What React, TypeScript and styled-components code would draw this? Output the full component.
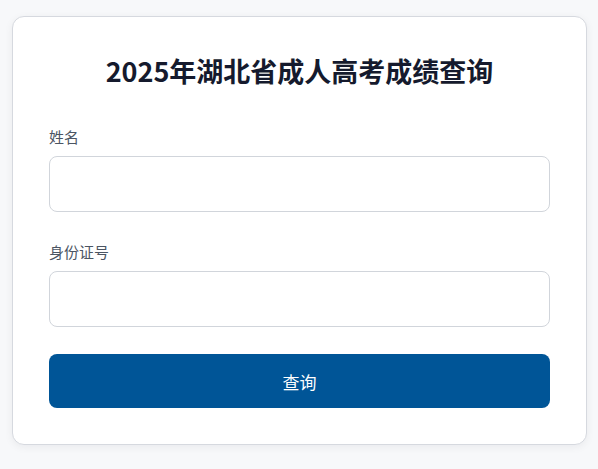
import styled, { createGlobalStyle } from 'styled-components';

const GlobalStyle = createGlobalStyle`
  * { box-sizing: border-box; }
  body {
    margin: 0;
    background: #f7f8fa;
    font-family: "Noto Sans CJK SC", "Noto Sans", sans-serif;
  }
`;

const Page = styled.div`
  padding: 16px 11px 16px 12px;
`;

const Card = styled.form`
  display: flex;
  flex-direction: column;
  padding: 34px 36px 36px;
  background: #ffffff;
  border: 1px solid #d6d9df;
  border-radius: 12px;
  box-shadow: 0 2px 8px rgba(15, 23, 42, 0.06);
`;

const Title = styled.h1`
  margin: 0 0 35px;
  font-size: 27px;
  line-height: 40px;
  font-weight: 700;
  text-align: center;
  color: #151a2d;
`;

const Field = styled.div<{ $gap: number }>`
  display: flex;
  flex-direction: column;
  margin-bottom: ${(p) => p.$gap}px;
`;

const Label = styled.label`
  font-size: 15px;
  line-height: 22px;
  color: #4b5563;
  margin-bottom: 8px;
`;

const Input = styled.input`
  height: 56px;
  padding: 0 16px;
  border: 1px solid #d1d5db;
  border-radius: 8px;
  font-size: 16px;
  font-family: inherit;
  outline: none;
  background: #fff;
`;

const Button = styled.button`
  height: 54px;
  border: none;
  border-radius: 8px;
  background: #005597;
  color: #ffffff;
  font-family: inherit;
  font-size: 17px;
  cursor: pointer;
`;

const App = () => {
  return (
    <Page>
      <GlobalStyle />
      <Card onSubmit={(e) => e.preventDefault()}>
        <Title>2025年湖北省成人高考成绩查询</Title>
        <Field $gap={29}>
          <Label htmlFor="name">姓名</Label>
          <Input id="name" type="text" />
        </Field>
        <Field $gap={27}>
          <Label htmlFor="idcard">身份证号</Label>
          <Input id="idcard" type="text" />
        </Field>
        <Button type="submit">查询</Button>
      </Card>
    </Page>
  );
};

export default App;
